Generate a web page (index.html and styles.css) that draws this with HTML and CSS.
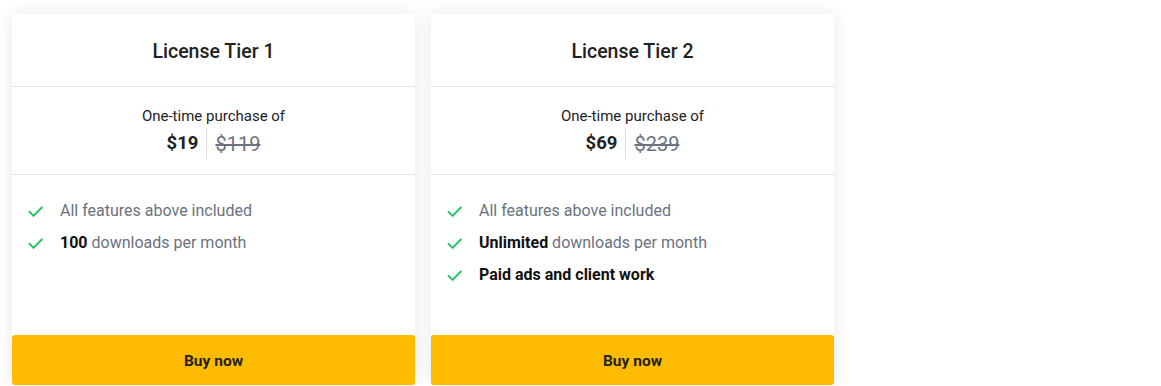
FILE: index.html
```html
<!DOCTYPE html>
<html lang="en">
<head>
    <meta charset="UTF-8" />
    <title>License Tiers</title>
    <link rel="stylesheet" href="styles.css">
</head>
<body>
<div class="tiers">
    <div class="tier">
        <div class="tier-title">License Tier 1</div>
        <div class="tier-price">
            <div class="price-label">One-time purchase of</div>
            <div class="price-row">
                <span class="price-now">$19</span>
                <span class="price-old">$119</span>
            </div>
        </div>
        <ul class="features">
            <li>
                <svg class="check" viewBox="0 0 24 24"><path d="M4.5 12.5l5 5L20 7"/></svg>
                <span>All features above included</span>
            </li>
            <li>
                <svg class="check" viewBox="0 0 24 24"><path d="M4.5 12.5l5 5L20 7"/></svg>
                <span><b>100</b> downloads per month</span>
            </li>
        </ul>
        <button class="btn" type="button">Buy now</button>
    </div>
    <div class="tier">
        <div class="tier-title">License Tier 2</div>
        <div class="tier-price">
            <div class="price-label">One-time purchase of</div>
            <div class="price-row">
                <span class="price-now">$69</span>
                <span class="price-old">$239</span>
            </div>
        </div>
        <ul class="features">
            <li>
                <svg class="check" viewBox="0 0 24 24"><path d="M4.5 12.5l5 5L20 7"/></svg>
                <span>All features above included</span>
            </li>
            <li>
                <svg class="check" viewBox="0 0 24 24"><path d="M4.5 12.5l5 5L20 7"/></svg>
                <span><b>Unlimited</b> downloads per month</span>
            </li>
            <li>
                <svg class="check" viewBox="0 0 24 24"><path d="M4.5 12.5l5 5L20 7"/></svg>
                <span><b>Paid ads and client work</b></span>
            </li>
        </ul>
        <button class="btn" type="button">Buy now</button>
    </div>
</div>
</body>
</html>
```

FILE: styles.css
```css
* {
    box-sizing: border-box;
}

body {
    font-family: Roboto, 'Noto Sans', sans-serif;
    margin: 0;
    background: #fff;
    color: #222;
}

.tiers {
    display: flex;
    gap: 16px;
    padding: 14px 12px 0;
}

.tier {
    width: 403px;
    height: 371px;
    display: flex;
    flex-direction: column;
    background: #fff;
    border-radius: 4px;
    box-shadow: 0 0 18px rgba(0, 0, 0, 0.09);
}

.tier-title {
    height: 73px;
    display: flex;
    align-items: center;
    justify-content: center;
    padding-top: 3px;
    font-size: 19.5px;
    font-weight: 500;
    color: #222;
    border-bottom: 1px solid #e3e4e6;
}

.tier-price {
    height: 88px;
    display: flex;
    flex-direction: column;
    align-items: center;
    padding-top: 19px;
    border-bottom: 1px solid #e3e4e6;
}

.price-label {
    font-size: 15px;
    line-height: 20px;
    color: #222;
}

.price-row {
    display: flex;
    align-items: center;
    margin-top: 2px;
}

.price-now {
    font-size: 18.5px;
    font-weight: 700;
    padding-right: 8px;
    line-height: 31px;
    border-right: 1px solid #dcdde0;
}

.price-old {
    font-size: 20px;
    color: #6b7280;
    text-decoration: line-through;
    padding-left: 8px;
}

.features {
    flex: 1;
    list-style: none;
    margin: 0;
    padding: 24px 14px 0;
    display: flex;
    flex-direction: column;
    gap: 8px;
}

.features li {
    display: flex;
    align-items: center;
    gap: 15px;
    font-size: 16px;
    line-height: 24px;
    color: #6b7280;
}

.features b {
    color: #111;
    font-weight: 700;
}

.check {
    width: 19px;
    height: 19px;
    fill: none;
    stroke: #22c55e;
    stroke-width: 2.5;
    stroke-linecap: round;
    stroke-linejoin: round;
}

.btn {
    height: 50px;
    border: none;
    border-radius: 3px;
    background: #ffbb00;
    color: #222;
    font-family: inherit;
    font-size: 15.5px;
    font-weight: 700;
    padding-top: 2px;
    cursor: pointer;
}
```
